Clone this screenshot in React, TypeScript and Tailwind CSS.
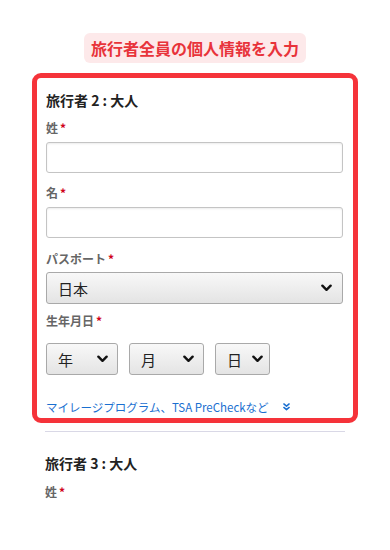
import React from "react";

const Chevron = ({ className = "" }: { className?: string }) => (
  <svg viewBox="0 0 12 8" className={className} fill="none">
    <path d="M1.5 1.5 L6 6 L10.5 1.5" stroke="#111" strokeWidth="2.6" strokeLinecap="round" strokeLinejoin="round" />
  </svg>
);

const DoubleChevron = () => (
  <svg viewBox="0 0 8 9" className="w-[7px] h-[8px]" fill="none">
    <path d="M1 1 L4 3.5 L7 1" stroke="#1a6fd0" strokeWidth="1.7" strokeLinecap="round" strokeLinejoin="round" />
    <path d="M1 5 L4 7.5 L7 5" stroke="#1a6fd0" strokeWidth="1.7" strokeLinecap="round" strokeLinejoin="round" />
  </svg>
);

const Label = ({ text, className = "" }: { text: string; className?: string }) => (
  <div className={`text-[12px] leading-[16px] font-semibold text-[#666] ${className}`}>
    {text}
    <span className="text-[#d0021b] ml-[2px]">*</span>
  </div>
);

const TextInput = ({ className = "" }: { className?: string }) => (
  <div
    className={`h-[31px] w-[297px] rounded-[3px] border border-[#c4c4c4] bg-white shadow-[inset_0_1px_2px_rgba(0,0,0,0.08)] ${className}`}
  />
);

const SelectBox = ({
  text,
  className = "",
  textPad = "pl-[11px]",
  chevPad = "pr-[9px]",
}: {
  text: string;
  className?: string;
  textPad?: string;
  chevPad?: string;
}) => (
  <div
    className={`h-[32px] rounded-[3px] border border-[#a9a9a9] bg-gradient-to-b from-[#f8f8f8] to-[#e4e4e4] flex items-center justify-between ${textPad} ${chevPad} ${className}`}
  >
    <span className="text-[15px] text-[#222] leading-none">{text}</span>
    <Chevron className="w-[11px] h-[8px]" />
  </div>
);

export default function App() {
  return (
    <div
      className="w-[390px] h-[550px] bg-white overflow-hidden"
      style={{ fontFamily: '"Noto Sans CJK JP", "Noto Sans", sans-serif' }}
    >
      <div className="flex justify-center pt-[33px]">
        <div className="h-[30px] px-[7px] rounded-[6px] bg-[#fde9ea] flex items-center justify-center whitespace-nowrap">
          <span className="text-[16px] font-bold text-[#e8333a] leading-none">旅行者全員の個人情報を入力</span>
        </div>
      </div>

      <div className="px-[45px]">
        <div className="-mx-[13px] mt-[10px] border-[5px] border-[#f5333a] rounded-[9px] pl-[9px] pr-[8px] pt-[12px] pb-[3px]">
          <div className="text-[14px] leading-[20px] font-bold text-[#222]">旅行者 2 : 大人</div>
          <Label text="姓" className="mt-[10px]" />
          <TextInput className="mt-[6px]" />
          <Label text="名" className="mt-[12px]" />
          <TextInput className="mt-[6px]" />
          <Label text="パスポート" className="mt-[13px]" />
          <SelectBox text="日本" className="mt-[5px] w-[297px]" textPad="pl-[11px]" chevPad="pr-[10px]" />
          <Label text="生年月日" className="mt-[9px]" />
          <div className="mt-[14px] flex gap-[11px]">
            <SelectBox text="年" className="w-[72px]" textPad="pl-[11px]" chevPad="pr-[9px]" />
            <SelectBox text="月" className="w-[75px]" textPad="pl-[11px]" chevPad="pr-[9px]" />
            <div className="w-[55px] h-[32px] rounded-[3px] border border-[#a9a9a9] bg-gradient-to-b from-[#f8f8f8] to-[#e4e4e4] flex items-center pl-[11px] gap-[10px]">
              <span className="text-[15px] text-[#222] leading-none">日</span>
              <Chevron className="w-[11px] h-[8px]" />
            </div>
          </div>
          <div className="mt-[24px] flex items-center gap-[14px] text-[11.5px] leading-[16px] text-[#1a6fd0] whitespace-nowrap">
            <span>マイレージプログラム、TSA PreCheckなど</span>
            <DoubleChevron />
          </div>
        </div>

        <div className="mt-[8px] h-px bg-[#d9d8e6]" />
        <div className="mt-[21px] text-[14px] leading-[20px] font-bold text-[#222]">旅行者 3 : 大人</div>
        <Label text="姓" className="mt-[11px]" />
      </div>
    </div>
  );
}
